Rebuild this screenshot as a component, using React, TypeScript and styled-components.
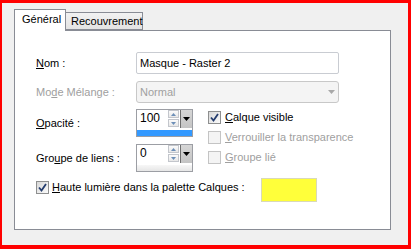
import React from "react";
import styled, { createGlobalStyle } from "styled-components";

const Global = createGlobalStyle`
  html, body { margin: 0; padding: 0; background: #f0f0f0; }
  body { font-family: "Liberation Sans", Arial, sans-serif; font-size: 11px; color: #000; }
`;

const Frame = styled.div`
  width: 411px;
  height: 249px;
  box-sizing: border-box;
  border: 3px solid #ff0000;
  border-left-width: 2px;
  border-bottom-width: 4px;
  background: #f0f0f0;
  padding: 6px 0 0 12px;
`;

const TabBar = styled.div`
  display: flex;
  align-items: flex-end;
  height: 21px;
`;

const Tab = styled.div<{ $active?: boolean }>`
  position: relative;
  z-index: ${(p) => (p.$active ? 2 : 1)};
  box-sizing: border-box;
  height: ${(p) => (p.$active ? "22px" : "18px")};
  margin-bottom: ${(p) => (p.$active ? "-1px" : "0")};
  border: 1px solid #898c95;
  border-bottom: ${(p) => (p.$active ? "none" : "1px solid #898c95")};
  border-left: ${(p) => (p.$active ? "1px solid #898c95" : "none")};
  background: ${(p) =>
    p.$active ? "#ffffff" : "linear-gradient(#f2f2f2, #e3e3e3)"};
  padding: ${(p) => (p.$active ? "3px 7px 0 7px" : "2px 5px 0 5px")};
  font-size: 11px;
  line-height: 13px;
  width: ${(p) => (p.$active ? "52px" : "77px")};
`;

const Panel = styled.div`
  width: 377px;
  height: 200px;
  box-sizing: border-box;
  border: 1px solid #898c95;
  background: #ffffff;
  padding: 21px 0 0 21px;
`;

const FieldRow = styled.div<{ $mt?: number }>`
  display: grid;
  grid-template-columns: 100px 203px;
  align-items: center;
  height: 22px;
  margin-top: ${(p) => p.$mt ?? 0}px;
`;

const Label = styled.span<{ $disabled?: boolean }>`
  color: ${(p) => (p.$disabled ? "#a0a0a0" : "#000")};
  white-space: nowrap;
  line-height: 14px;
`;

const TextBox = styled.div`
  box-sizing: border-box;
  height: 22px;
  border: 1px solid #c9ccd2;
  border-radius: 2px;
  background: #fff;
  padding: 0 3px;
  display: flex;
  align-items: center;
`;

const Select = styled.div`
  box-sizing: border-box;
  height: 22px;
  border: 1px solid #c8c8c8;
  border-radius: 3px;
  background: #f4f4f4;
  color: #a0a0a0;
  padding: 0 3px;
  display: flex;
  align-items: center;
  justify-content: space-between;
`;

const Block = styled.div`
  display: flex;
  margin-top: 6px;
`;

const LeftCol = styled.div`
  display: flex;
  flex-direction: column;
  gap: 7px;
`;

const SpinRow = styled.div`
  display: grid;
  grid-template-columns: 100px 57px;
  align-items: center;
  height: 28px;
`;

const Spinner = styled.div`
  box-sizing: border-box;
  width: 57px;
  height: 28px;
  border: 1px solid #9c9ea4;
  background: #fff;
  display: flex;
  flex-direction: column;
`;

const SpinTop = styled.div`
  display: flex;
  height: 20px;
`;

const SpinValue = styled.div`
  flex: 1;
  padding: 1px 0 0 3px;
  font-size: 12px;
  line-height: 14px;
`;

const SpinArrows = styled.div`
  width: 11px;
  display: flex;
  flex-direction: column;
  gap: 1px;
  padding-top: 0px;
  margin-right: 1px;
`;

const ArrowBtn = styled.div`
  box-sizing: border-box;
  height: 8px;
  border: 1px solid #c3c6cc;
  background: linear-gradient(#fbfbfb, #e8e8e8);
  display: flex;
  align-items: center;
  justify-content: center;
`;

const DropBtn = styled.div`
  box-sizing: border-box;
  width: 12px;
  height: 18px;
  border-left: 1px solid #6e6e6e;
  background: linear-gradient(#d6d6d6, #c4c4c4);
  display: flex;
  align-items: center;
  justify-content: center;
`;

const SpinBar = styled.div<{ $blue?: boolean }>`
  flex: 1;
  background: ${(p) =>
    p.$blue ? "#3399ff" : "linear-gradient(#f7f7f7, #e6e6e6)"};
`;

const RightCol = styled.div`
  display: flex;
  flex-direction: column;
  margin-left: 15px;
  margin-top: -2px;
`;

const CheckItem = styled.div<{ $disabled?: boolean }>`
  display: flex;
  align-items: center;
  gap: 4px;
  height: 20px;
  color: ${(p) => (p.$disabled ? "#a0a0a0" : "#000")};
  white-space: nowrap;
`;

const Box = styled.div<{ $disabled?: boolean }>`
  box-sizing: border-box;
  width: 13px;
  height: 13px;
  border: 1px solid ${(p) => (p.$disabled ? "#c4c4c4" : "#8e8f8f")};
  background: ${(p) =>
    p.$disabled ? "#f4f4f4" : "linear-gradient(135deg, #d8d8d8, #fbfbfb)"};
  display: flex;
  align-items: center;
  justify-content: center;
  flex: none;
`;

const HighlightRow = styled.div`
  display: grid;
  grid-template-columns: 225px 56px;
  align-items: flex-start;
  margin-top: 6px;
`;

const HighlightLabel = styled.div`
  display: flex;
  align-items: center;
  gap: 3px;
  height: 18px;
  white-space: nowrap;
`;

const Swatch = styled.div`
  box-sizing: border-box;
  width: 56px;
  height: 24px;
  background: #ffff3a;
  border: 1px solid #d9d9b8;
`;

const U = styled.span`
  text-decoration: underline;
  text-underline-offset: 1px;
`;

const Check = () => (
  <svg width="9" height="9" viewBox="0 0 9 9">
    <path d="M1 4.5 L3.5 7.5 L8 1" fill="none" stroke="#243c6e" strokeWidth="1.8" />
  </svg>
);

const CheckBox: React.FC<{ checked?: boolean; disabled?: boolean }> = ({ checked, disabled }) => (
  <Box $disabled={disabled}>{checked ? <Check /> : null}</Box>
);

const Tri: React.FC<{ up?: boolean; color: string; w?: number; h?: number }> = ({ up, color, w = 5, h = 3 }) => (
  <svg width={w} height={h} viewBox={`0 0 ${w} ${h}`}>
    <polygon points={up ? `0,${h} ${w},${h} ${w / 2},0` : `0,0 ${w},0 ${w / 2},${h}`} fill={color} />
  </svg>
);

const SpinControl: React.FC<{ value: string; blue?: boolean }> = ({ value, blue }) => (
  <Spinner>
    <SpinTop>
      <SpinValue>{value}</SpinValue>
      <SpinArrows>
        <ArrowBtn>
          <Tri up color="#6d8fb8" />
        </ArrowBtn>
        <ArrowBtn>
          <Tri color="#6d8fb8" />
        </ArrowBtn>
      </SpinArrows>
      <DropBtn>
        <Tri color="#000" w={7} h={4} />
      </DropBtn>
    </SpinTop>
    <SpinBar $blue={blue} />
  </Spinner>
);

export default function App() {
  return (
    <>
      <Global />
      <Frame>
        <TabBar>
          <Tab $active>Général</Tab>
          <Tab>Recouvrement</Tab>
        </TabBar>
        <Panel>
          <FieldRow>
            <Label>
              <U>N</U>om :
            </Label>
            <TextBox>Masque - Raster 2</TextBox>
          </FieldRow>
          <FieldRow $mt={7}>
            <Label $disabled>
              Mo<U>d</U>e Mélange :
            </Label>
            <Select>
              <span>Normal</span>
              <Tri color="#a8a8a8" w={7} h={4} />
            </Select>
          </FieldRow>
          <Block>
            <LeftCol>
              <SpinRow>
                <Label>
                  <U>O</U>pacité :
                </Label>
                <SpinControl value="100" blue />
              </SpinRow>
              <SpinRow>
                <Label>
                  Gro<U>u</U>pe de liens :
                </Label>
                <SpinControl value="0" />
              </SpinRow>
            </LeftCol>
            <RightCol>
              <CheckItem>
                <CheckBox checked />
                <span>
                  <U>C</U>alque visible
                </span>
              </CheckItem>
              <CheckItem $disabled>
                <CheckBox disabled />
                <span>
                  <U>V</U>errouiller la transparence
                </span>
              </CheckItem>
              <CheckItem $disabled>
                <CheckBox disabled />
                <span>
                  <U>G</U>roupe lié
                </span>
              </CheckItem>
            </RightCol>
          </Block>
          <HighlightRow>
            <HighlightLabel>
              <CheckBox checked />
              <span>
                <U>H</U>aute lumière dans la palette Calques :
              </span>
            </HighlightLabel>
            <Swatch />
          </HighlightRow>
        </Panel>
      </Frame>
    </>
  );
}
